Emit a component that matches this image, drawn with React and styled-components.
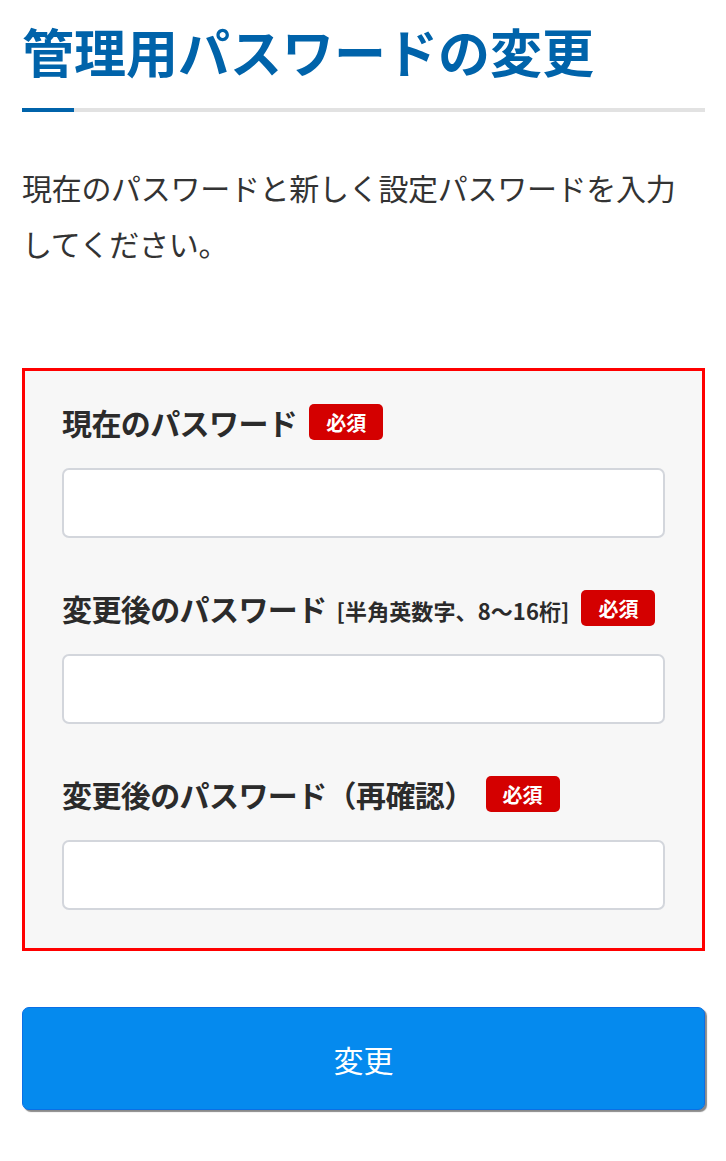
import styled, { createGlobalStyle } from "styled-components";

const GlobalStyle = createGlobalStyle`
    body {
        margin: 0;
        background: #fff;
        font-family: "Noto Sans CJK JP", "Noto Sans", sans-serif;
        color: #333;
    }
`;

const fields = [
    { id: "current", label: "現在のパスワード" },
    { id: "next", label: "変更後のパスワード", note: "[半角英数字、8〜16桁]" },
    { id: "confirm", label: "変更後のパスワード（再確認）" },
];

function App() {
    return (
        <>
            <GlobalStyle />
            <Page>
                <Title>管理用パスワードの変更</Title>
                <Rule />
                <Lead>現在のパスワードと新しく設定パスワードを入力してください。</Lead>

                <FormBox>
                    {fields.map((field) => (
                        <Field key={field.id}>
                            <LabelRow>
                                <Label htmlFor={field.id}>{field.label}</Label>
                                {field.note ? <Note>{field.note}</Note> : null}
                                <Required>必須</Required>
                            </LabelRow>
                            <Input id={field.id} type="password" />
                        </Field>
                    ))}
                </FormBox>

                <SubmitButton type="button">変更</SubmitButton>
            </Page>
        </>
    );
}

const Page = styled.div`
    padding: 23px 21px 50px 22px;
`;

const Title = styled.h1`
    margin: 0;
    font-size: 52px;
    line-height: 56px;
    font-weight: 700;
    color: #0063aa;
`;

const Rule = styled.div`
    margin-top: 29px;
    height: 4px;
    background: linear-gradient(to right, #0063aa 0, #0063aa 52px, #e2e2e2 52px);
`;

const Lead = styled.p`
    margin: 47px 0 0;
    font-size: 30px;
    line-height: 56px;
    font-weight: 400;
    letter-spacing: -0.3px;
    color: #333;
    padding-right: 10px;
`;

const FormBox = styled.div`
    margin-top: 97px;
    border: 3px solid #ff0000;
    background: #f7f7f7;
    padding: 31px 37px 38px;
    display: flex;
    flex-direction: column;
    gap: 50px;
`;

const Field = styled.div`
    display: flex;
    flex-direction: column;
`;

const LabelRow = styled.div`
    display: flex;
    align-items: center;
    height: 40px;
    margin-bottom: 26px;
`;

const Label = styled.label`
    font-size: 30px;
    font-weight: 700;
    color: #2b2b2b;
    letter-spacing: -0.6px;
`;

const Note = styled.span`
    margin-left: 10px;
    font-size: 22px;
    font-weight: 700;
    color: #2b2b2b;
    letter-spacing: 0.1px;
    padding-top: 4px;
`;

const Required = styled.span`
    margin-left: 12px;
    display: inline-flex;
    align-items: center;
    justify-content: center;
    width: 74px;
    height: 36px;
    border-radius: 5px;
    background: #d40000;
    color: #fff;
    font-size: 20px;
    font-weight: 700;
`;

const Input = styled.input`
    box-sizing: border-box;
    width: 100%;
    height: 70px;
    border: 2px solid #d3d6dc;
    border-radius: 7px;
    background: #fff;
    padding: 0 16px;
    font-size: 24px;
    outline: none;
`;

const SubmitButton = styled.button`
    display: block;
    box-sizing: border-box;
    width: 100%;
    height: 103px;
    margin-top: 56px;
    border: 1px solid #0a6fe6;
    border-radius: 7px;
    background: #058aee;
    box-shadow: 2px 2px 1px #8a8a8a;
    color: #fff;
    font-family: "Noto Sans CJK JP", sans-serif;
    font-size: 30px;
    font-weight: 400;
    cursor: pointer;
`;

export default App;
